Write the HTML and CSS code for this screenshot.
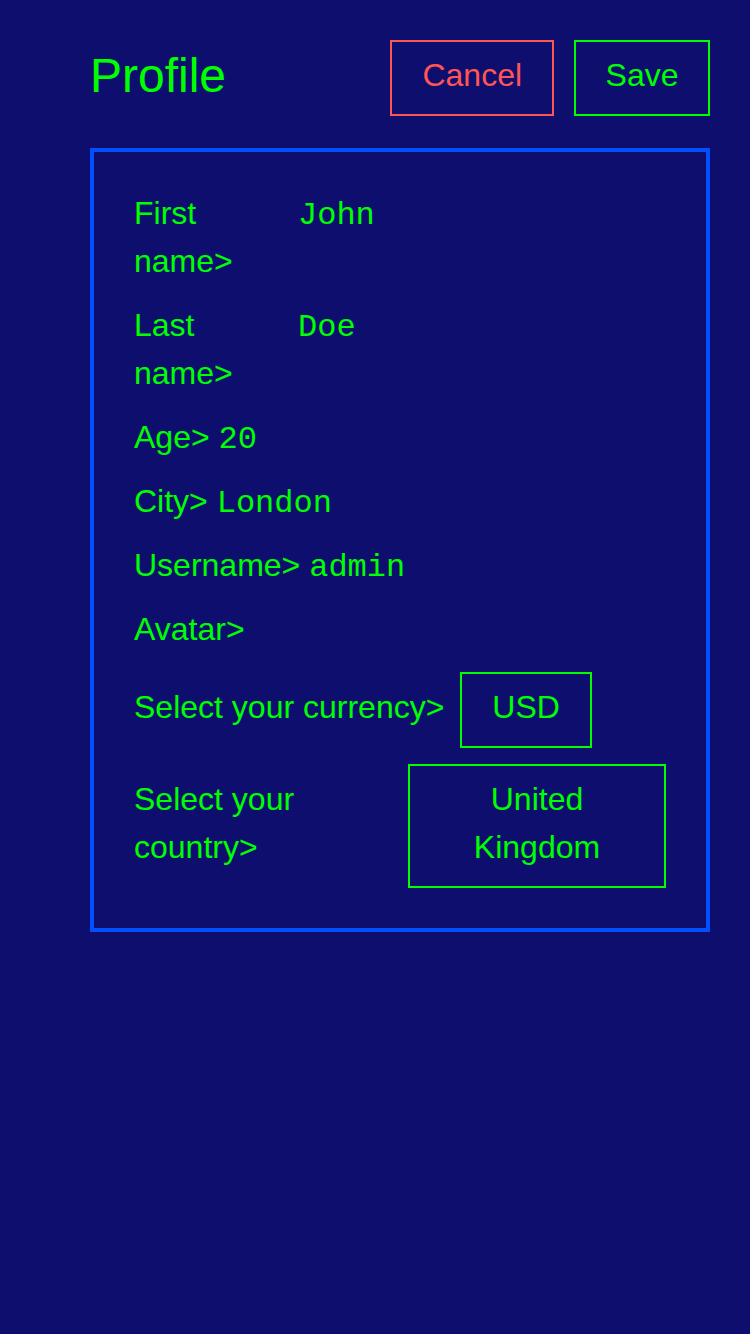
FILE: index.html
```html
<!DOCTYPE html>
<html lang="en">
<head>
<meta charset="utf-8">
<title>Profile</title>
<link rel="stylesheet" href="styles.css">
</head>
<body>
<div class="page">
  <header class="header">
    <h1 class="title">Profile</h1>
    <div class="actions">
      <button class="btn btn-cancel">Cancel</button>
      <button class="btn btn-save">Save</button>
    </div>
  </header>
  <section class="card">
    <div class="row row-split">
      <span class="label label-fixed">First name&gt;</span>
      <span class="value">John</span>
    </div>
    <div class="row row-split">
      <span class="label label-fixed">Last name&gt;</span>
      <span class="value">Doe</span>
    </div>
    <div class="row">
      <span class="label">Age&gt; <span class="value value-inline">20</span></span>
    </div>
    <div class="row">
      <span class="label">City&gt; <span class="value value-inline">London</span></span>
    </div>
    <div class="row">
      <span class="label">Username&gt; <span class="value value-inline">admin</span></span>
    </div>
    <div class="row">
      <span class="label">Avatar&gt;</span>
    </div>
    <div class="row row-select row-currency">
      <span class="label">Select your currency&gt;</span>
      <div class="select">USD</div>
    </div>
    <div class="row row-select">
      <span class="label label-grow">Select your country&gt;</span>
      <div class="select select-wide">United Kingdom</div>
    </div>
  </section>
</div>
</body>
</html>
```
FILE: styles.css
```css
* { box-sizing: border-box; }
html, body {
  margin: 0;
  padding: 0;
  background: #0e0e6e;
}
body {
  font-family: "Liberation Sans", Arial, sans-serif;
  color: #00ff00;
  font-size: 32px;
  line-height: 1.5;
  min-height: 1334px;
}
.page {
  padding: 40px 40px 0 90px;
}
.header {
  display: flex;
  align-items: flex-start;
  justify-content: space-between;
}
.title {
  margin: 0;
  font-size: 48px;
  font-weight: normal;
  line-height: 72px;
}
.actions {
  display: flex;
  gap: 20px;
}
.btn {
  font-family: "Liberation Sans", Arial, sans-serif;
  font-size: 32px;
  line-height: 48px;
  padding: 9px 30px 15px;
  background: transparent;
  border: 2px solid #00ff00;
  color: #00ff00;
  margin: 0;
}
.btn-save {
  padding-left: 29.5px;
  padding-right: 29.5px;
}
.btn-cancel {
  color: #ff5555;
  border-color: #ff5555;
}
.card {
  margin-top: 32px;
  border: 4px solid #0050ff;
  padding: 37px 40px 40px;
  display: flex;
  flex-direction: column;
  gap: 16px;
}
.row {
  display: flex;
  align-items: baseline;
  gap: 16px;
}
.label-fixed {
  width: 148px;
  flex: none;
}
.value {
  font-family: "Liberation Mono", "Courier New", monospace;
}
.value-inline {
  line-height: 1;
}
.row-currency {
  margin-top: 3px;
}
.label-grow {
  flex: 1;
}
.select {
  border: 2px solid #00ff00;
  padding: 9px 30px 15px;
  text-align: center;
  flex: none;
}
.select-wide {
  width: 258px;
}
```
